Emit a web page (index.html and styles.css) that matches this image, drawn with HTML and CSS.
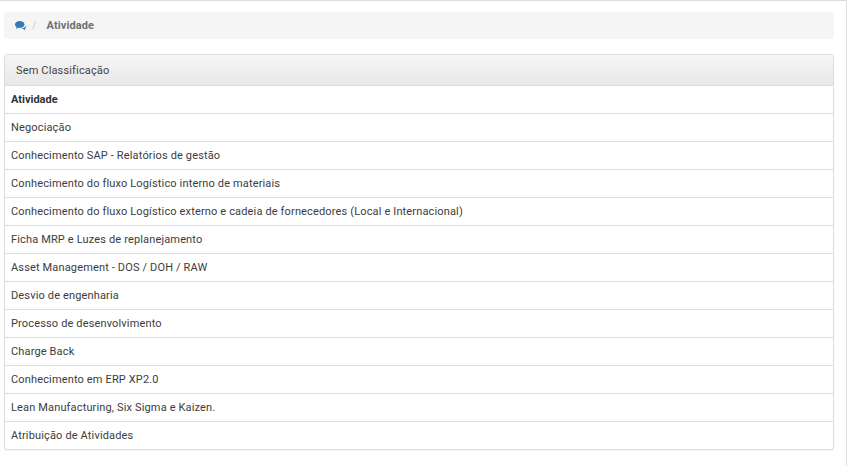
FILE: index.html
```html
<!DOCTYPE html>
<html lang="pt">
<head>
<meta charset="utf-8">
<title>Atividade</title>
<link rel="stylesheet" href="styles.css">
</head>
<body>
<div class="page">
  <nav class="crumb">
    <svg class="crumb-icon" viewBox="0 0 1792 1792" aria-hidden="true"><path d="M704 320q-130 0-241 46t-176 125-65 173q0 76 49 146t138 121l87 50-31 112q-11 40-24 74 98-41 177-111l43-38 57 6q66 7 126 7 130 0 241-46t176-125 65-173-65-173-176-125-241-46h-140zM1536 1216q89-51 138-121t50-147q0-78-53-148-29 110-117 201-89 91-221 147-133 56-286 64 120 108 301 114l57-6 43 38q79 70 177 111-13-34-24-74l-31-112z" transform="translate(-60 60)"/><path d="M1408 664q0 139-94 257t-256 186-353 68q-86 0-176-16-124 88-278 128-36 9-86 16h-3q-11 0-20.500-8t-11.500-21q-1-3-1-6.500t.5-6.500 2-6l2.500-5 3.500-5.500 4-5 4.500-5 4-4.500q5-6 23-25t26-29.500 22.500-29 25-38.500 20.500-44q-124-72-195-177t-71-224q0-139 94-257t256-186 353-68 353 68 256 186 94 257z"/></svg>
    <span class="crumb-sep">/</span>
    <span class="crumb-current">Atividade</span>
  </nav>
  <section class="panel">
    <header class="panel-head">Sem Classificação</header>
    <ul class="rows">
      <li class="row row-title">Atividade</li>
      <li class="row">Negociação</li>
      <li class="row">Conhecimento SAP - Relatórios de gestão</li>
      <li class="row">Conhecimento do fluxo Logístico interno de materiais</li>
      <li class="row">Conhecimento do fluxo Logístico externo e cadeia de fornecedores (Local e Internacional)</li>
      <li class="row">Ficha MRP e Luzes de replanejamento</li>
      <li class="row">Asset Management - DOS / DOH / RAW</li>
      <li class="row">Desvio de engenharia</li>
      <li class="row">Processo de desenvolvimento</li>
      <li class="row">Charge Back</li>
      <li class="row">Conhecimento em ERP XP2.0</li>
      <li class="row">Lean Manufacturing, Six Sigma e Kaizen.</li>
      <li class="row">Atribuição de Atividades</li>
    </ul>
  </section>
</div>
</body>
</html>
```

FILE: styles.css
```css
* { box-sizing: border-box; }
html, body { margin: 0; padding: 0; background: #fff; }
body {
  font-family: Roboto, "Liberation Sans", sans-serif;
  font-size: 11px;
  color: #3c3c3c;
  height: 466px;
  overflow: hidden;
}
.page {
  height: 466px;
  border-top: 1px solid #ddd;
  border-right: 1px solid #ddd;
  padding: 11px 12px 0 4px;
}
.crumb {
  height: 27px;
  background: #f5f5f5;
  border-radius: 3px;
  display: flex;
  align-items: center;
  padding-left: 11px;
  margin-bottom: 15px;
}
.crumb-icon { width: 12px; height: 12px; fill: #337ab7; display: block; }
.crumb-sep { color: #ccc; margin-left: 5px; }
.crumb-current { color: #707070; font-weight: 700; margin-left: 10px; letter-spacing: .1px; }
.panel {
  border: 1px solid #ddd;
  border-radius: 3px;
  box-shadow: 0 1px 1px rgba(0, 0, 0, .05);
  background: #fff;
  overflow: hidden;
}
.panel-head {
  height: 31px;
  padding: 0 11px;
  display: flex;
  align-items: center;
  background: linear-gradient(to bottom, #f5f5f5, #e8e8e8);
  border-bottom: 1px solid #ddd;
  color: #444;
  letter-spacing: .15px;
}
.rows { list-style: none; margin: 0; padding: 0; }
.row {
  height: 28px;
  padding: 0 6px;
  display: flex;
  align-items: center;
  border-bottom: 1px solid #ddd;
  letter-spacing: .15px;
}
.row:last-child { border-bottom: 0; height: 27px; }
.row-title { font-weight: 700; letter-spacing: 0; color: #333; }
```
